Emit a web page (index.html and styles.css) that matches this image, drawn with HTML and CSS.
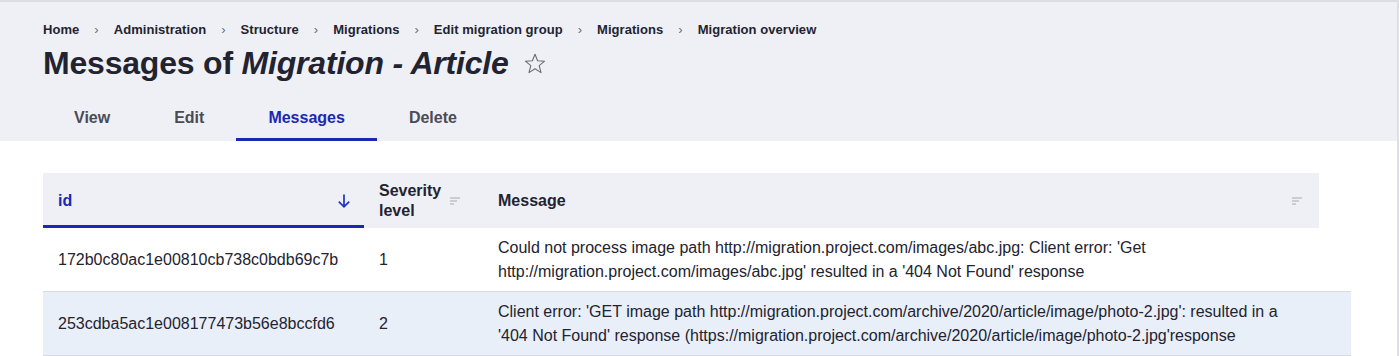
FILE: index.html
```html
<!DOCTYPE html>
<html lang="en">
<head>
  <meta charset="UTF-8" />
  <title>Messages of Migration - Article</title>
  <link rel="stylesheet" href="styles.css">
</head>
<body>
  <div class="page-header">
    <ol class="breadcrumb">
      <li><a href="#">Home</a></li>
      <li><a href="#">Administration</a></li>
      <li><a href="#">Structure</a></li>
      <li><a href="#">Migrations</a></li>
      <li><a href="#">Edit migration group</a></li>
      <li><a href="#">Migrations</a></li>
      <li><a href="#">Migration overview</a></li>
    </ol>

    <div class="title-row">
      <h1 class="page-title">Messages of <em>Migration - Article</em></h1>
      <button class="shortcut" title="Add to Default shortcuts">
        <svg width="24" height="24" viewBox="0 0 24 24">
          <path d="M12 2.2l2.6 6.6 7 .4-5.4 4.5 1.8 6.9L12 16.8l-6 3.8 1.8-6.9-5.4-4.5 7-.4z" fill="none" stroke="#6b6c75" stroke-width="1.1" stroke-linejoin="round"/>
        </svg>
      </button>
    </div>

    <ul class="tabs">
      <li><a href="#" class="tab">View</a></li>
      <li><a href="#" class="tab">Edit</a></li>
      <li><a href="#" class="tab is-active">Messages</a></li>
      <li><a href="#" class="tab">Delete</a></li>
    </ul>
  </div>

  <main class="content">
    <table class="messages">
      <thead>
        <tr>
          <th class="col-id is-sorted">
            <span class="th-inner">id
              <svg class="sort-arrow" width="14" height="16" viewBox="0 0 14 16">
                <path d="M7 1.5v12M1.8 8.6L7 13.8l5.2-5.2" fill="none" stroke="#1a35c4" stroke-width="1.7"/>
              </svg>
            </span>
          </th>
          <th class="col-level">
            <span class="th-inner">Severity<br>level
              <svg class="sort-icon" width="10" height="8" viewBox="0 0 10 8">
                <path d="M0 1h10M0 4h7M0 7h4" stroke="#a8a9b0" stroke-width="1.1"/>
              </svg>
            </span>
          </th>
          <th class="col-message">
            <span class="th-inner">Message
              <svg class="sort-icon" width="10" height="8" viewBox="0 0 10 8">
                <path d="M0 1h10M0 4h7M0 7h4" stroke="#a8a9b0" stroke-width="1.1"/>
              </svg>
            </span>
          </th>
        </tr>
      </thead>
      <tbody>
        <tr>
          <td>172b0c80ac1e00810cb738c0bdb69c7b</td>
          <td>1</td>
          <td>Could not process image path http://migration.project.com/images/abc.jpg: Client error: 'Get http://migration.project.com/images/abc.jpg' resulted in a '404 Not Found' response</td>
        </tr>
        <tr class="is-selected">
          <td>253cdba5ac1e008177473b56e8bccfd6</td>
          <td>2</td>
          <td>Client error: 'GET image path http://migration.project.com/archive/2020/article/image/photo-2.jpg': resulted in a '404 Not Found' response (https://migration.project.com/archive/2020/article/image/photo-2.jpg'response</td>
        </tr>
      </tbody>
    </table>
  </main>
</body>
</html>
```

FILE: styles.css
```css
* {
  box-sizing: border-box;
  margin: 0;
  padding: 0;
}

html {
  border-right: 2px solid #dedfe4;
}

body {
  font-family: 'Liberation Sans', Arial, sans-serif;
  color: #222330;
  background: #fff;
  border-top: 2px solid #dcdde2;
  min-height: 354px;
}

a {
  color: inherit;
  text-decoration: none;
}

/* Header area */
.page-header {
  display: flex;
  flex-direction: column;
  background: #eff0f5;
  padding: 20px 43px 0;
  height: 139px;
}

.breadcrumb {
  display: flex;
  list-style: none;
  font-size: 13px;
  font-weight: bold;
  line-height: 16px;
  letter-spacing: 0.05px;
}

.breadcrumb li + li::before {
  content: "›";
  color: #6b6c75;
  font-weight: normal;
  padding: 0 15px 0 15px;
}

.title-row {
  display: flex;
  align-items: center;
  margin-top: 5px;
}

.page-title {
  font-size: 32px;
  font-weight: bold;
  line-height: 40px;
  letter-spacing: -0.2px;
}

.shortcut {
  border: none;
  background: none;
  margin-left: 14px;
  display: flex;
  padding-top: 2px;
}

.tabs {
  display: flex;
  list-style: none;
  margin-top: auto;
  margin-left: -1px;
}

.tab {
  display: block;
  padding: 10px 32px;
  font-size: 16px;
  font-weight: bold;
  line-height: 20px;
  color: #4a4b55;
  border-bottom: 3px solid transparent;
}

.tab.is-active {
  color: #1a29b0;
  border-bottom-color: #1a29b0;
}

/* Table */
.content {
  padding: 32px 47px 0 43px;
}

.messages {
  width: 1308px;
  border-collapse: collapse;
  font-size: 16px;
  line-height: 24px;
}

.messages th {
  text-align: left;
  font-weight: bold;
  font-size: 16px;
  line-height: 20px;
  height: 55px;
  padding: 0 15px;
  background: #eff0f5;
  vertical-align: middle;
}

.messages th.col-message {
  background: linear-gradient(to right, #eff0f5 calc(100% - 32px), #fff 0);
  padding-right: 49px;
}

.th-inner {
  display: flex;
  align-items: center;
  justify-content: space-between;
}

.messages th.is-sorted {
  color: #1a29b0;
  box-shadow: inset 0 -3px 0 #1a29b0;
}

.col-id {
  width: 321px;
}

.col-level {
  width: 119px;
}

.col-level .sort-icon {
  margin-right: 8px;
}

.sort-arrow {
  margin-right: -2px;
}

.messages td {
  padding: 8px 15px 7px;
  vertical-align: middle;
  border-bottom: 1px solid #dadbe0;
}

.messages td:last-child {
  padding-right: 40px;
}

.messages tr.is-selected td {
  background: #e9eff9;
}
```
